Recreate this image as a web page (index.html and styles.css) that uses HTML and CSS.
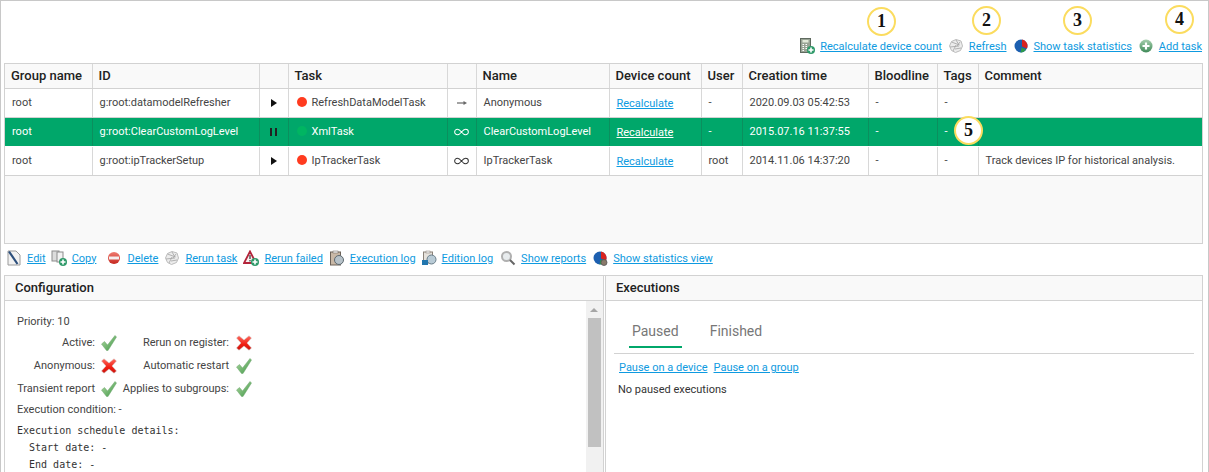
FILE: index.html
```html
<!DOCTYPE html>
<html lang="en">
<head>
  <meta charset="UTF-8">
  <title>Scheduled tasks</title>
  <link rel="stylesheet" href="styles.css">
</head>
<body>
  <svg class="defs" width="0" height="0">
    <defs>
      <linearGradient id="greenGrad" x1="0" y1="0" x2="1" y2="1"><stop offset="0" stop-color="#b5dca6"/><stop offset="1" stop-color="#3a9443"/></linearGradient>
      <linearGradient id="redGrad" x1="0" y1="0" x2="0" y2="1"><stop offset="0" stop-color="#ff6a5e"/><stop offset=".6" stop-color="#f01d12"/><stop offset="1" stop-color="#c9140c"/></linearGradient>
      <linearGradient id="delGrad" x1="0" y1="0" x2="0" y2="1"><stop offset="0" stop-color="#ef7b70"/><stop offset="1" stop-color="#c5271f"/></linearGradient>
      <linearGradient id="addGrad" x1="0" y1="0" x2="0" y2="1"><stop offset="0" stop-color="#a7cfae"/><stop offset="1" stop-color="#3f8a58"/></linearGradient>
      <symbol id="plus" viewBox="0 0 16 16"><circle cx="12" cy="12" r="4" fill="#2f9a6a"/><path d="M12 9.500v5M9.500 12h5" stroke="#fff" stroke-width="1.600"/></symbol>
      <symbol id="refresh" viewBox="0 0 16 16"><path d="M1.500 8l2-4.500L8 1.500l5 1.500 1.500 5-2 4.500-5 2-4-2z" fill="#ececec" stroke="#bcbcbc"/><path d="M3.500 4l8 3M2 9l9-1M5 13l3-6M8 2l3 5M7 11l6-1M12 4L9 8" stroke="#a3a3a3" stroke-width=".8" fill="none"/></symbol>
      <symbol id="stats" viewBox="0 0 16 16"><circle cx="8" cy="8" r="6.500" fill="#1c5fb0"/><path d="M9 1.600A6.500 6.500 0 0 1 14 10.500L9 8.500z" fill="#d9231f"/><path d="M8.500 9.500l4.500 2A6.500 6.500 0 0 1 7.500 14.500z" fill="#2e9a4a"/></symbol>
      <symbol id="check" viewBox="0 0 16 16"><path d="M0.500 9l3-2.500 3 3.500L14 0.500 15.500 2 7 15.500h-1.500z" fill="url(#greenGrad)" stroke="#6da56d" stroke-width=".5"/></symbol>
      <symbol id="cross" viewBox="0 0 16 16"><path d="M.5 3L3 .8 8 5 13 .8 15.500 3 11 8l4.500 5-2.500 2.200L8 11l-5 4.200L.5 13 5 8z" fill="url(#redGrad)" stroke="#cfcfcf" stroke-width=".5"/></symbol>
      <symbol id="loop" viewBox="0 0 16 8"><path d="M8 4C6 1.500 5 1 3.700 1a3 3 0 0 0 0 6C5 7 6 6.500 8 4c2-2.500 3-3 4.300-3a3 3 0 0 1 0 6C11 7 10 6.500 8 4z" fill="none" stroke="currentColor" stroke-width="1.100"/></symbol>
    </defs>
  </svg>

  <div class="page">
    <div class="top-actions">
      <svg class="icon" viewBox="0 0 16 16"><rect x="1.500" y=".5" width="10" height="14" fill="#98a394" stroke="#5f6a5f"/><rect x="3.500" y="2" width="6" height="2.500" fill="#e2ead9"/><path d="M3.500 6.500h1.500M6.500 6.500H8M3.500 8.500h1.500M6.500 8.500H8M3.500 10.500h1.500M6.500 10.500H8M3.500 12.500h1.500" stroke="#fff"/><use href="#plus"/></svg>
      <a href="#" class="link gap-a">Recalculate device count</a>
      <svg class="icon"><use href="#refresh"/></svg>
      <a href="#" class="link gap-b">Refresh</a>
      <svg class="icon"><use href="#stats"/></svg>
      <a href="#" class="link gap-c">Show task statistics</a>
      <svg class="icon" viewBox="0 0 16 16"><circle cx="8" cy="8" r="6.500" fill="url(#addGrad)"/><path d="M8 4.500v7M4.500 8h7" stroke="#fff" stroke-width="2.200"/></svg>
      <a href="#" class="link">Add task</a>
    </div>

    <div class="table-wrap">
      <table class="tasks">
        <colgroup>
          <col class="c-group"><col class="c-id"><col class="c-state"><col class="c-task"><col class="c-type">
          <col class="c-name"><col class="c-count"><col class="c-user"><col class="c-time"><col class="c-blood"><col class="c-tags"><col>
        </colgroup>
        <thead>
          <tr>
            <th>Group name</th><th>ID</th><th></th><th>Task</th><th></th><th>Name</th>
            <th>Device count</th><th>User</th><th>Creation time</th><th>Bloodline</th><th>Tags</th><th>Comment</th>
          </tr>
        </thead>
        <tbody>
          <tr>
            <td>root</td><td>g:root:datamodelRefresher</td>
            <td class="center"><span class="play"></span></td>
            <td><span class="dot red"></span>RefreshDataModelTask</td>
            <td class="center"><svg class="type-arrow" viewBox="0 0 10 6"><path d="M0 3h7" stroke="#666" stroke-width="1.200"/><path d="M6.500 1l3.500 2-3.500 2z" fill="#666"/></svg></td>
            <td>Anonymous</td><td class="count"><a href="#" class="link">Recalculate</a></td><td>-</td>
            <td>2020.09.03 05:42:53</td><td>-</td><td>-</td><td></td>
          </tr>
          <tr class="selected">
            <td>root</td><td>g:root:ClearCustomLogLevel</td>
            <td class="center"><span class="pause"></span></td>
            <td><span class="dot green"></span>XmlTask</td>
            <td class="center"><svg class="type-icon"><use href="#loop"/></svg></td>
            <td>ClearCustomLogLevel</td><td class="count"><a href="#" class="link">Recalculate</a></td><td>-</td>
            <td>2015.07.16 11:37:55</td><td>-</td><td>-</td><td></td>
          </tr>
          <tr>
            <td>root</td><td>g:root:ipTrackerSetup</td>
            <td class="center"><span class="play"></span></td>
            <td><span class="dot red"></span>IpTrackerTask</td>
            <td class="center"><svg class="type-icon"><use href="#loop"/></svg></td>
            <td>IpTrackerTask</td><td class="count"><a href="#" class="link">Recalculate</a></td><td>root</td>
            <td>2014.11.06 14:37:20</td><td>-</td><td>-</td><td>Track devices IP for historical analysis.</td>
          </tr>
        </tbody>
      </table>
    </div>

    <div class="row-actions">
      <svg class="icon" viewBox="0 0 16 16"><path d="M2 1h8l4 4v10H2z" fill="#f2f2f2" stroke="#9a9a9a"/><path d="M3 1.500l8.500 12.500" stroke="#2c4f7c" stroke-width="2.200"/></svg>
      <a href="#" class="link m-edit">Edit</a>
      <svg class="icon" viewBox="0 0 16 16"><rect x="1" y="1" width="7" height="10" fill="#dcdcdc" stroke="#8c8c8c"/><rect x="6" y="2" width="6" height="10" fill="#f2f2f2" stroke="#8c8c8c"/><use href="#plus"/></svg>
      <a href="#" class="link m-copy">Copy</a>
      <svg class="icon" viewBox="0 0 16 16"><circle cx="8" cy="8" r="6" fill="url(#delGrad)"/><rect x="3" y="6.500" width="10" height="3" fill="#f4eeee"/></svg>
      <a href="#" class="link m-std">Delete</a>
      <svg class="icon"><use href="#refresh"/></svg>
      <a href="#" class="link m-std">Rerun task</a>
      <svg class="icon" viewBox="0 0 16 16"><path d="M7 1.500L1 13h12z" fill="#f7f0f0" stroke="#b3243a" stroke-width="1.800"/><path d="M7 5v4M7 10v1.500" stroke="#333" stroke-width="1.200"/><use href="#plus"/></svg>
      <a href="#" class="link m-std">Rerun failed</a>
      <svg class="icon" viewBox="0 0 16 16"><rect x="1.500" y="2" width="10" height="13" fill="#c9b8a6" stroke="#6c6258"/><rect x="4" y="1" width="5" height="2" fill="#eee" stroke="#6c6258" stroke-width=".5"/><circle cx="10" cy="10" r="4.500" fill="#b7c2c9" stroke="#5d6970"/></svg>
      <a href="#" class="link m-exec">Execution log</a>
      <svg class="icon" viewBox="0 0 16 16"><rect x="2.500" y="2" width="9" height="11" fill="#e6e2dc" stroke="#8a8178"/><rect x="5" y="1" width="4" height="2" fill="#eee" stroke="#8a8178" stroke-width=".5"/><circle cx="10.500" cy="9.500" r="4.500" fill="#b9cbd6" stroke="#6a7e8a"/><rect x="1" y="10" width="6" height="5" fill="#2176ae"/></svg>
      <a href="#" class="link m-report">Edition log</a>
      <svg class="icon" viewBox="0 0 16 16"><circle cx="6.500" cy="6.500" r="4.500" fill="#e8ecee" stroke="#b0b0b0" stroke-width="2"/><path d="M10 10l4.500 4.500" stroke="#666" stroke-width="2"/></svg>
      <a href="#" class="link m-std">Show reports</a>
      <svg class="icon" viewBox="0 0 16 16"><use href="#stats"/><circle cx="12" cy="12.500" r="3" fill="#8a7a6a" stroke="#555" stroke-width=".8"/></svg>
      <a href="#" class="link">Show statistics view</a>
    </div>

    <div class="panels">
      <section class="panel config">
        <h2 class="panel-title">Configuration</h2>
        <div class="panel-body">
          <div class="config-content">
            <p class="config-line">Priority: 10</p>
            <div class="flags">
              <span class="flag-label">Active:</span><svg class="flag"><use href="#check"/></svg>
              <span class="flag-label">Rerun on register:</span><svg class="flag"><use href="#cross"/></svg>
              <span class="flag-label">Anonymous:</span><svg class="flag"><use href="#cross"/></svg>
              <span class="flag-label">Automatic restart</span><svg class="flag"><use href="#check"/></svg>
              <span class="flag-label">Transient report</span><svg class="flag"><use href="#check"/></svg>
              <span class="flag-label">Applies to subgroups:</span><svg class="flag"><use href="#check"/></svg>
            </div>
            <p class="config-line">Execution condition: -</p>
            <pre class="schedule">Execution schedule details:
  Start date: -
  End date: -</pre>
          </div>
          <div class="scrollbar"><span class="arrow"></span><span class="thumb"></span></div>
        </div>
      </section>
      <section class="panel executions">
        <h2 class="panel-title">Executions</h2>
        <div class="exec-body">
          <div class="tabs">
            <span class="tab active">Paused</span>
            <span class="tab">Finished</span>
          </div>
          <div class="pause-links">
            <a href="#" class="link">Pause on a device</a>
            <a href="#" class="link">Pause on a group</a>
          </div>
          <p class="empty">No paused executions</p>
        </div>
      </section>
    </div>

    <span class="badge b1">1</span>
    <span class="badge b2">2</span>
    <span class="badge b3">3</span>
    <span class="badge b4">4</span>
    <span class="badge b5">5</span>
  </div>
</body>
</html>
```

FILE: styles.css
```css
* { margin: 0; padding: 0; box-sizing: border-box; }
html, body { height: 100%; overflow: hidden; }
body {
  font-family: 'Roboto', sans-serif;
  font-size: 11px;
  color: #333;
  background: #fff;
}
.defs { position: absolute; }
.page {
  position: relative;
  width: 1209px;
  height: 472px;
  border: 1px solid #c8c8c8;
  border-bottom: 0;
  overflow: hidden;
  padding: 0 5px 0 3px;
}
.link { color: #0e9ae0; text-decoration: underline; }
.icon { width: 16px; height: 16px; flex: none; margin-right: 5px; }

/* top links */
.top-actions {
  display: flex;
  justify-content: flex-end;
  align-items: center;
  height: 62px;
  padding: 28px 1px 0 0;
}
.gap-a { margin-right: 6px; }
.gap-b { margin-right: 6px; }
.gap-c { margin-right: 6px; }

/* task table */
.table-wrap {
  height: 181px;
  border: 1px solid #d2d2d2;
  background: #f9f9f9;
}
.tasks {
  width: 100%;
  table-layout: fixed;
  border-collapse: collapse;
}
.c-group { width: 87px; }
.c-id { width: 167px; }
.c-state { width: 29px; }
.c-task { width: 159px; }
.c-type { width: 29px; }
.c-name { width: 133px; }
.c-count { width: 92px; }
.c-user { width: 41px; }
.c-time { width: 126px; }
.c-blood { width: 69px; }
.c-tags { width: 41px; }
.tasks th {
  height: 24px;
  padding: 0 6px;
  font-size: 13px;
  font-weight: 500;
  color: #222;
  text-align: left;
  border-right: 1px solid #d8d8d8;
  border-bottom: 1px solid #d2d2d2;
  background: #f9f9f9;
  white-space: nowrap;
}
.tasks td {
  height: 29px;
  padding: 0 7px;
  color: #444;
  background: #fff;
  border-right: 1px solid #d8d8d8;
  border-bottom: 1px solid #d2d2d2;
  white-space: nowrap;
}
.tasks th:last-child, .tasks td:last-child { border-right: 0; }
.tasks .center { text-align: center; padding: 0; }
.tasks .count { padding-top: 2px; }
.tasks .selected td {
  background: #00a76a;
  color: #fff;
  border-right-color: #0b8f5e;
  border-bottom-color: #fff;
}
.tasks .selected .link { color: #fff; }
.play {
  display: inline-block;
  border-left: 6px solid #111;
  border-top: 4px solid transparent;
  border-bottom: 4px solid transparent;
  vertical-align: -1px;
}
.pause {
  display: inline-block;
  width: 7px;
  height: 8px;
  border-left: 2.500px solid #222;
  border-right: 2.500px solid #222;
  vertical-align: -1px;
}
.dot {
  display: inline-block;
  width: 10px;
  height: 10px;
  border-radius: 50%;
  margin: 0 5px 0 1px;
  vertical-align: -1px;
}
.dot.red { background: #ff3b1f; }
.dot.green { background: #00b562; }
.type-icon { width: 15px; height: 8px; color: #333; vertical-align: -1px; }
.selected .type-icon { color: #fff; }
.type-arrow { width: 10px; height: 6px; vertical-align: 0; }

/* row actions */
.row-actions {
  display: flex;
  align-items: center;
  height: 30px;
  padding: 0 0 2px 2px;
}
.m-edit { margin-right: 5px; }
.m-copy { margin-right: 10px; }
.m-std { margin-right: 6px; }
.m-exec { margin-right: 5px; }
.m-report { margin-right: 7px; }

/* bottom panels */
.panels {
  display: grid;
  grid-template-columns: 600px 1fr;
  height: 200px;
  border: 1px solid #d2d2d2;
  border-bottom: 0;
  margin-top: 1px;
}
.panel { display: flex; flex-direction: column; min-width: 0; }
.executions { border-left: 1px solid #d2d2d2; }
.config { border-right: 1px solid #d2d2d2; width: 599px; }
.panel-title {
  height: 25px;
  line-height: 24px;
  padding-left: 10px;
  font-size: 13px;
  font-weight: 500;
  color: #222;
  background: #f9f9f9;
  border-bottom: 1px solid #d2d2d2;
}
.panel-body { display: flex; flex: 1; min-height: 0; }
.config-content { flex: 1; padding: 14px 0 0 12px; color: #444; }
.config-line { height: 21px; line-height: 14px; }
.flags {
  display: grid;
  grid-template-columns: 78px 22px 112px 23px;
  grid-template-rows: 23px 23px 20px;
  width: max-content;
  margin-bottom: 1px;
}
.flag-label { text-align: right; line-height: 14px; white-space: nowrap; }
.flag { width: 16px; height: 16px; margin: -1px 0 0 6px; }
.flag:nth-child(4n) { margin-left: 7px; }
.schedule {
  margin-top: -2px;
  font-family: 'DejaVu Sans Mono', monospace;
  font-size: 10px;
  line-height: 17px;
  color: #333;
}
.scrollbar {
  position: relative;
  width: 17px;
  background: #f1f1f1;
}
.arrow {
  position: absolute;
  top: 7px;
  left: 4px;
  border-left: 4px solid transparent;
  border-right: 4px solid transparent;
  border-bottom: 4px solid #a6a6a6;
}
.thumb {
  position: absolute;
  top: 17px;
  left: 2px;
  width: 13px;
  height: 129px;
  background: #c1c1c1;
}

.exec-body { padding: 0 8px; }
.tabs {
  display: flex;
  gap: 25px;
  height: 53px;
  padding: 0 0 0 15px;
  border-bottom: 1px solid #d2d2d2;
  align-items: flex-start;
}
.tab {
  font-size: 14px;
  color: #777;
  padding: 21px 3px 0;
  height: 47px;
  line-height: 18px;
}
.tab.active { border-bottom: 2px solid #00a76a; }
.pause-links { padding: 7px 0 0 5px; display: flex; gap: 6px; }
.empty { padding: 9px 0 0 4px; color: #333; }

/* numbered callouts */
.badge {
  position: absolute;
  width: 29px;
  height: 29px;
  line-height: 25px;
  text-align: center;
  border: 2px solid #fbdc5f;
  border-radius: 50%;
  background: #fff;
  font-family: 'Liberation Serif', serif;
  font-size: 18px;
  font-weight: 700;
  color: #111;
}
.b1 { left: 866px; top: 6px; }
.b2 { left: 971px; top: 5px; }
.b3 { left: 1062px; top: 5px; }
.b4 { left: 1164px; top: 4px; }
.b5 { left: 953px; top: 115px; }
```
